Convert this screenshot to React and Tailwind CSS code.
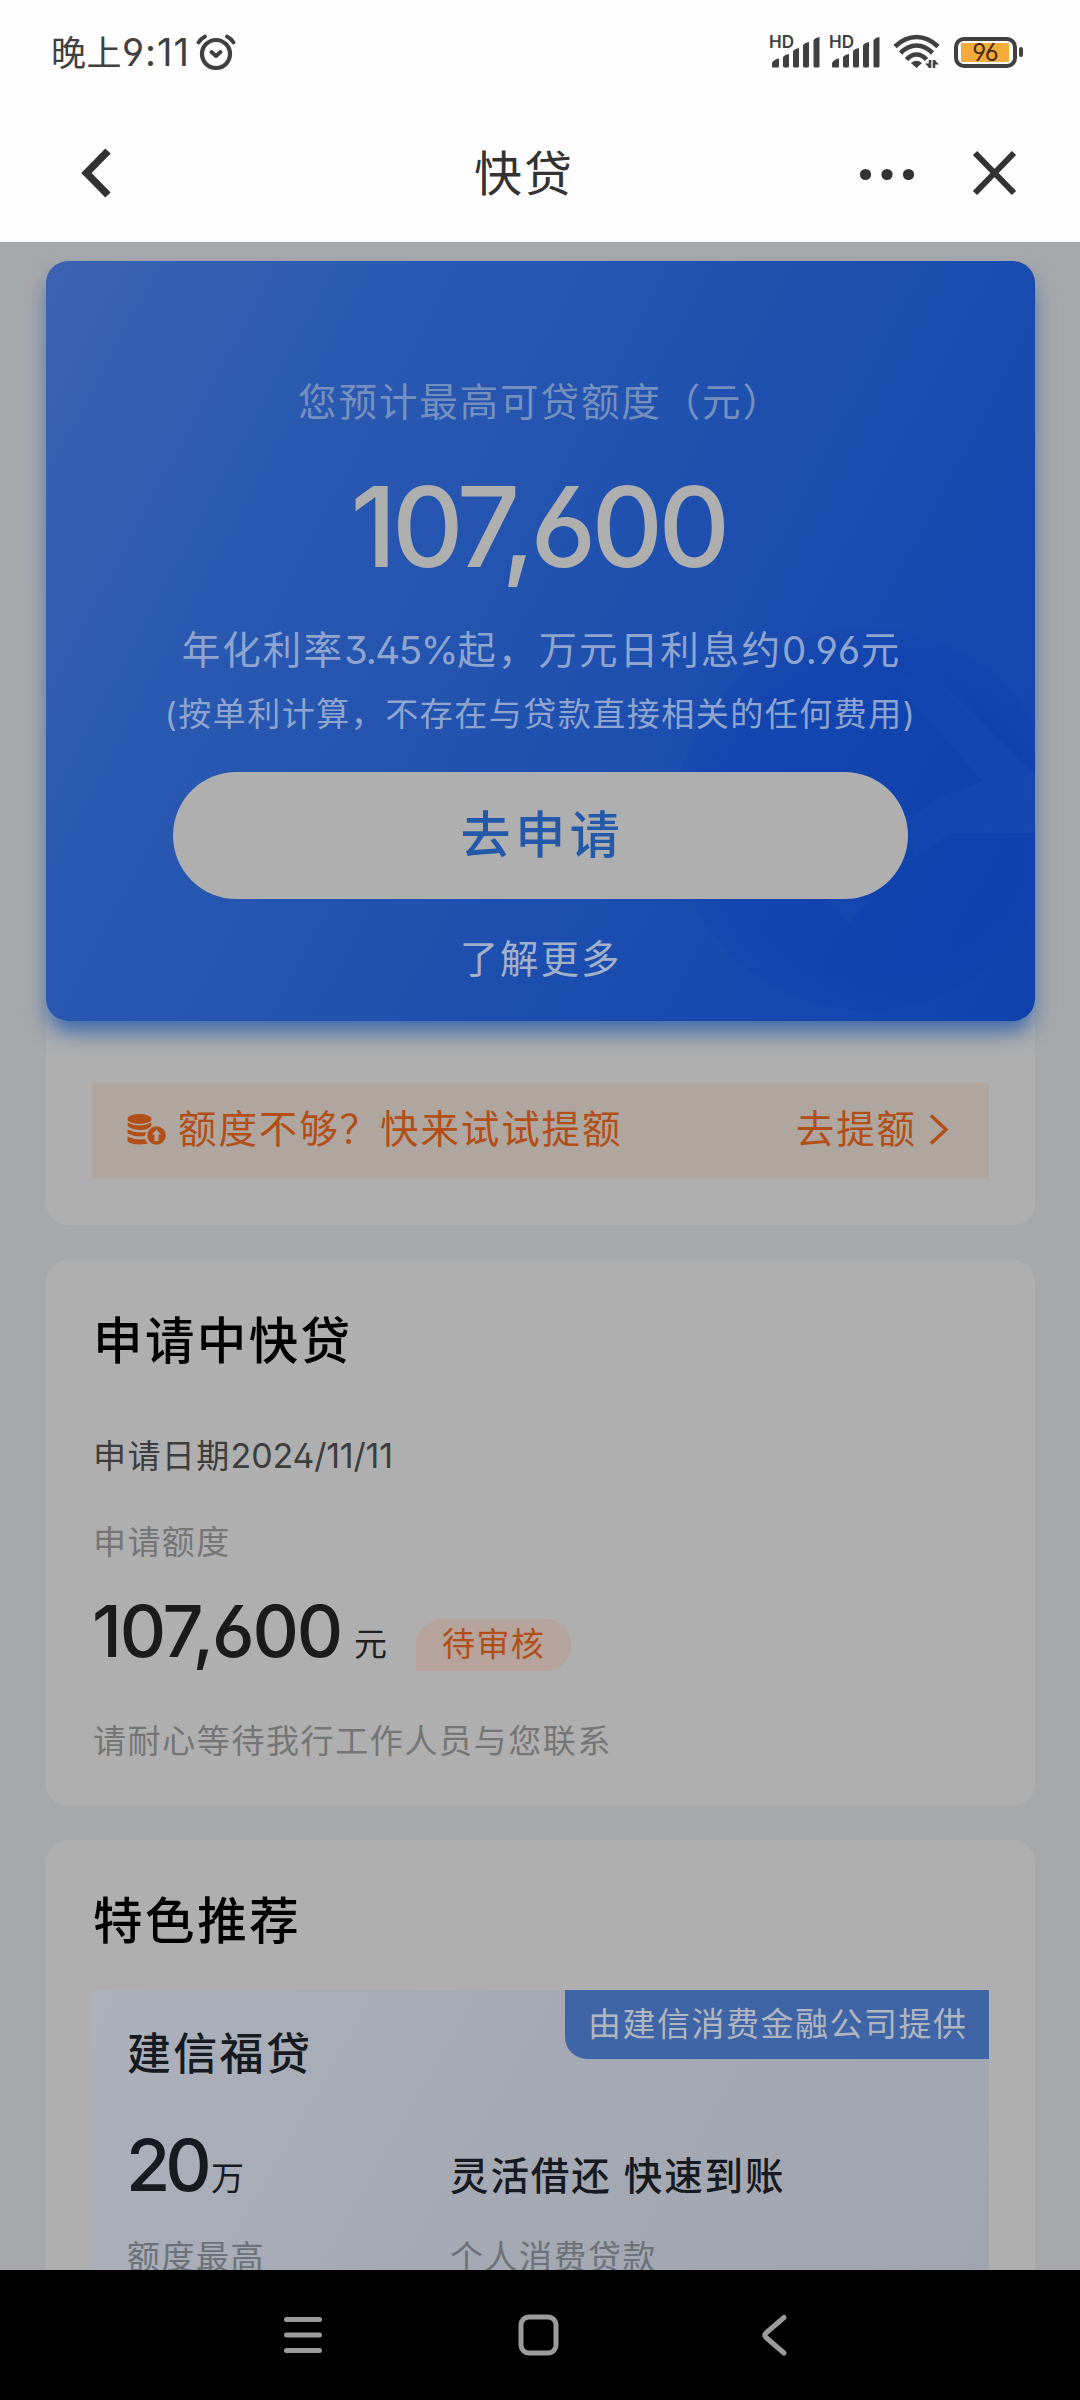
function SignalIcon() {
  return (
    <svg className="h-[34px] w-[52px] overflow-visible" viewBox="0 0 52 34" fill="#404040">
      <text x="-1" y="14" fontSize="17" fontWeight="600" fontFamily="Inter, sans-serif">
        HD
      </text>
      <path d="M2 33v-4q2-4 7-4.500v8q0 1-1 1H3q-1 0-1-1z" />
      <path d="M13 32v-9q2-2.500 6-3v12q0 1.500-1.500 1.500h-3q-1.500 0-1.500-1.500z" />
      <path d="M23 32V17q2-2.500 6-3v18q0 1.500-1.500 1.500h-3q-1.500 0-1.500-1.500z" />
      <path d="M33 32V11q2-2.500 6-3v24q0 1.500-1.500 1.500h-3q-1.500 0-1.500-1.500z" />
      <path d="M43.500 32V6q2-2.500 6-3v29q0 1.500-1.500 1.500h-3q-1.500 0-1.500-1.500z" />
    </svg>
  );
}

function AlarmIcon() {
  return (
    <svg className="h-9 w-10" viewBox="0 0 40 36" fill="none" stroke="#404040" strokeLinecap="round" strokeLinejoin="round">
      <circle cx="20" cy="20" r="14" strokeWidth="4.200" />
      <path d="M15.500 18l4.500 4 4.500-4" strokeWidth="4" />
      <path d="M2.500 8.500Q5 4.500 9 2.500M37.500 8.500Q35 4.500 31 2.500" strokeWidth="3.800" />
    </svg>
  );
}

function WifiIcon() {
  return (
    <svg className="h-[35px] w-[47px]" viewBox="0 0 47 35" fill="none" stroke="#404040" strokeWidth="4.600">
      <path d="M2 12.500Q12 3 23.500 3T45 12.500" />
      <path d="M7.500 19Q15 11.500 23.500 11.500T39.500 19" />
      <path d="M13.500 25.500Q18 20.500 23.500 20.500T33.500 25.500" />
      <path d="M18 29q5.500-4.500 11 0l-5.500 5z" fill="#404040" stroke="none" />
      <path d="M37 26v8M41 34v-8" strokeWidth="2.600" />
      <path d="M37 34.500l-5-5h5zM41 25.500l5 5h-5z" fill="#404040" stroke="none" />
    </svg>
  );
}

function StatusBar() {
  return (
    <div className="flex h-[70px] items-start justify-between pt-[33px] pr-[57px] pl-[51px] text-[#404040]">
      <div className="flex">
        <span className="w-[145px] text-[35px] leading-none tracking-[0.500px]">
          晚上<span className="text-[38px] tracking-[1px]">9:11</span>
        </span>
        <div className="mt-px">
          <AlarmIcon />
        </div>
      </div>
      <div className="mt-px flex items-start">
        <SignalIcon />
        <div className="w-2" />
        <SignalIcon />
        <div className="w-[11px]" />
        <WifiIcon />
        <div className="mt-[3px] ml-[14px] flex h-[31px] w-[63px] items-center rounded-[10px] border-4 border-[#404040] pl-[3px]">
          <div className="flex h-[19px] w-[48px] items-center justify-center bg-[#f3ac3c] text-[24px] leading-none tracking-[-1px] text-[#4a2c10]">
            96
          </div>
        </div>
        <div className="mt-[13px] ml-[2px] h-[10px] w-[4px] rounded-full bg-[#404040]" />
      </div>
    </div>
  );
}

function NavBar() {
  return (
    <div className="grid h-[172px] grid-cols-3 pt-[78px] text-[#333]">
      <svg className="ml-[80px] h-[50px] w-[32px]" viewBox="0 0 32 50" fill="none" stroke="#333" strokeWidth="7.500">
        <path d="M28 3L6.500 25 28 47" />
      </svg>
      <h1 className="pt-[2px] pr-[32px] text-center text-[48px] leading-none tracking-[2px]">快贷</h1>
      <div className="flex justify-end pr-[63px]">
        <svg className="h-[50px] w-[56px]" viewBox="0 0 56 50" fill="#333">
          <circle cx="6.500" cy="26.500" r="5.600" />
          <circle cx="28" cy="26.500" r="5.600" />
          <circle cx="49.500" cy="26.500" r="5.600" />
        </svg>
        <svg className="ml-[57px] h-[50px] w-[45px]" viewBox="0 0 45 50" fill="none" stroke="#333" strokeWidth="6">
          <path d="M3 5l39 40M42 5L3 45" />
        </svg>
      </div>
    </div>
  );
}

// faint round emblem in the card's lower right corner
function Emblem() {
  return (
    <svg className="absolute right-0 bottom-0 h-[440px] w-[400px]" viewBox="0 0 400 440">
      <defs>
        <radialGradient id="emblem">
          <stop offset="0.8" stopColor="#0b3cae" stopOpacity="0.4" />
          <stop offset="1" stopColor="#0b3cae" stopOpacity="0.16" />
        </radialGradient>
        <linearGradient id="band" x1="0" y1="0" x2="1" y2="1">
          <stop offset="0" stopColor="#3a63b8" stopOpacity="0.04" />
          <stop offset="1" stopColor="#3a63b8" stopOpacity="0.14" />
        </linearGradient>
      </defs>
      <circle cx="232" cy="238" r="192" fill="url(#emblem)" />
      <path d="M258 100l36-12 106 106v58h-84l-36 24-16-30 40-30 44-16z" fill="url(#band)" />
      <path d="M192 318h44l-22 24z" fill="#3a63b8" fillOpacity="0.12" />
    </svg>
  );
}

function QuotaCard() {
  return (
    <div className="relative h-[760px] overflow-hidden rounded-[22px] bg-linear-[118deg,#3c63b0_0%,#2b5ab1_22%,#2152af_50%,#184ab0_75%,#1042ae_100%]">
      <Emblem />
      <div className="relative flex flex-col items-center">
        <p className="mt-[122px] text-[38.500px] leading-none tracking-[1.900px] text-[#7590be]">您预计最高可贷额度（元）</p>
        <p className="mt-[49px] pr-[5px] text-[111px] leading-none font-medium tracking-[-4.700px] text-[#afafaf]">107,600</p>
        <p className="mt-[49px] pl-[2px] text-[38.500px] leading-none tracking-[2.100px] text-[#8fa5cf]">
          年化利率<span className="tracking-[-1.400px]">3.45%</span>起，万元日利息约
          <span className="tracking-[0.500px]">0.96</span>元
        </p>
        <p className="mt-[29px] text-[33px] leading-none tracking-[1.500px] text-[#8fa5cf]">(按单利计算，不存在与贷款直接相关的任何费用)</p>
        <button className="mt-[41px] h-[127px] w-[735px] rounded-full bg-[#afafaf] pb-[2px] pl-[4px] text-[50px] leading-none font-medium tracking-[4.700px] text-[#2359a8]">
          去申请
        </button>
        <p className="mt-[41px] text-[38.500px] leading-none tracking-[1.900px] text-[#a3b0ca]">了解更多</p>
      </div>
    </div>
  );
}

function CoinsIcon() {
  return (
    <svg className="h-[31px] w-[39px]" viewBox="0 0 39 31" fill="#b24e17">
      <ellipse cx="12.500" cy="5" rx="12" ry="5" />
      <path d="M.500 8.500q12 6 24 0v3q-4 5-12 4.500T.500 12z" />
      <path d="M.500 15.500q9 4.500 19 2.500-1.500 2-1.500 4-9 1.500-17.500-2.500z" />
      <path d="M.500 22.500q8 4 17.500 2.500 1 3 3 4.500-14 2.500-20.500-2z" />
      <circle cx="29.500" cy="21.500" r="9.300" />
      <path d="M29.500 15.500l4.500 5h-2.500v6.500h-4v-6.500H25z" fill="#b0a69f" />
    </svg>
  );
}

function RaiseQuota() {
  return (
    <div className="mx-[46px] mt-[62px] flex h-[96px] items-start bg-[#afa69f] pt-[27px] pr-[40px] pl-[35px] text-[38.500px] leading-none tracking-[1.900px] text-[#b24e17]">
      <div className="mt-1">
        <CoinsIcon />
      </div>
      <span className="ml-[12px] flex-1">额度不够？快来试试提额</span>
      <span>去提额</span>
      <svg className="mt-1 ml-[12px] h-[31px] w-[20px]" viewBox="0 0 20 31" fill="none" stroke="#b24e17" strokeWidth="3.500">
        <path d="M2 1.500l15 14-15 14" />
      </svg>
    </div>
  );
}

function Applying() {
  return (
    <div className="mt-[35px] h-[546px] rounded-[22px] bg-[#afafaf] pt-[57px] pl-[47px]">
      <h2 className="text-[49.500px] leading-none font-medium tracking-[2.400px] text-black">申请中快贷</h2>
      <p className="mt-[72px] text-[33px] leading-none tracking-[1.400px] text-[#3d3d3d]">
        申请日期<span className="text-[34px] tracking-[-0.200px]">2024/11/11</span>
      </p>
      <p className="mt-[53px] text-[33px] leading-none tracking-[1.400px] text-[#757575]">申请额度</p>
      <div className="mt-[36px] flex h-[77px] items-start">
        <span className="-ml-px w-[262px] text-[72px] leading-none font-medium tracking-[-2.200px] text-[#1b1b1b]">107,600</span>
        <span className="mt-[33px] w-[62px] text-[33px] leading-none text-[#1f1f1f]">元</span>
        <span className="mt-[24px] h-[52px] w-[155px] rounded-[26px] rounded-bl-none bg-[#b5a39c] pt-[9px] pl-[26px] text-[33px] leading-none tracking-[1.400px] text-[#b24e17]">
          待审核
        </span>
      </div>
      <p className="mt-[53px] text-[33px] leading-none tracking-[1.600px] text-[#757575]">请耐心等待我行工作人员与您联系</p>
    </div>
  );
}

function Featured() {
  return (
    <div className="mt-[34px] h-[600px] rounded-[22px] bg-[#afafaf] px-[46px] pt-[57px]">
      <h2 className="pl-[1px] text-[49.500px] leading-none font-medium tracking-[2.600px] text-black">特色推荐</h2>
      <div className="mt-[43px] h-[480px] bg-linear-[120deg,#acb1bb_0%,#a5aab4_35%,#9fa4ae_100%]">
        <div className="flex justify-between pl-[35px] text-[#171a20]">
          <h3 className="mt-[42px] text-[44px] leading-none font-medium tracking-[2.300px]">建信福贷</h3>
          <span className="h-[69px] w-[424px] rounded-bl-[22px] bg-[#4065a6] pt-[18px] pl-[23px] text-[33px] leading-none tracking-[1.500px] text-[#b0b6c0]">
            由建信消费金融公司提供
          </span>
        </div>
        <div className="mt-[53px] grid grid-cols-[323px_1fr] pl-[35px]">
          <div className="flex items-start text-[#171a20]">
            <span className="-ml-px w-[85px] text-[72px] leading-none font-medium tracking-[-5px]">20</span>
            <span className="mt-[33px] text-[33px] leading-none">万</span>
          </div>
          <p className="mt-[28px] text-[38.500px] leading-none font-medium tracking-[1.900px] text-[#171a20]">灵活借还 快速到账</p>
          <p className="mt-[40px] text-[33px] leading-none tracking-[1.500px] text-[#6d7178]">额度最高</p>
          <p className="mt-[40px] text-[33px] leading-none tracking-[1.500px] text-[#6d7178]">个人消费贷款</p>
        </div>
      </div>
    </div>
  );
}

function SystemNav() {
  return (
    <div className="flex h-[130px] items-start bg-black pt-[43px] pl-[283px]">
      <svg className="h-[44px] w-[40px]" viewBox="0 0 40 44" stroke="#9b9b9b" strokeWidth="5" strokeLinecap="round">
        <path d="M3.500 6.500h33M3.500 22h33M3.500 37.500h33" />
      </svg>
      <svg className="ml-[194px] h-[44px] w-[44px]" viewBox="0 0 44 44" fill="none" stroke="#9b9b9b" strokeWidth="5">
        <rect x="4" y="4" width="35" height="36" rx="8" />
      </svg>
      <svg className="ml-[198px] h-[44px] w-[30px]" viewBox="0 0 30 44" fill="none" stroke="#9b9b9b" strokeWidth="5" strokeLinecap="round" strokeLinejoin="round">
        <path d="M25 4.500L7 20q-2.500 2 0 4.500L25 40" />
      </svg>
    </div>
  );
}

export default function App() {
  return (
    <div className="flex h-[2400px] w-[1080px] flex-col overflow-hidden bg-[#fdfdfd] font-['Inter','Noto_Sans_CJK_SC',sans-serif] whitespace-nowrap [font-feature-settings:'ss01']">
      <StatusBar />
      <NavBar />
      <div className="h-[2028px] overflow-hidden bg-[#a6a8aa] px-[45px] pt-[19px] pl-[46px]">
        <div className="h-[964px] rounded-[22px] bg-[#afafaf]">
          <div className="rounded-[22px] shadow-[0_14px_22px_-3px_#3a68ae]">
            <QuotaCard />
          </div>
          <RaiseQuota />
        </div>
        <Applying />
        <Featured />
      </div>
      <SystemNav />
    </div>
  );
}
